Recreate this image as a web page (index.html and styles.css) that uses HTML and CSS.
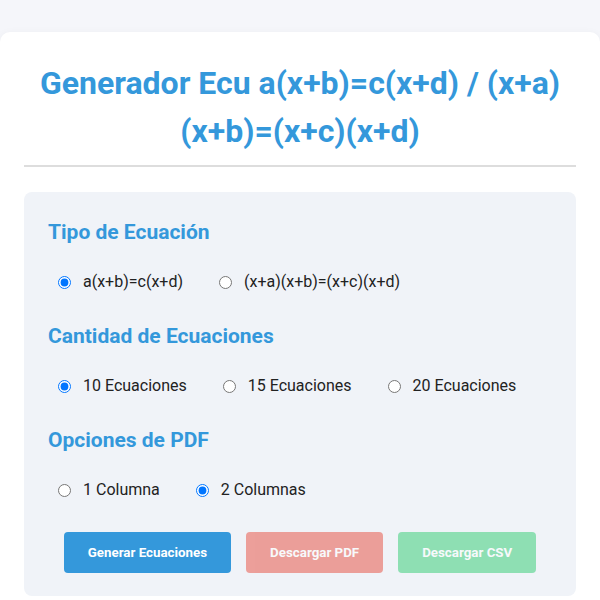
FILE: index.html
```html
<!DOCTYPE html>
<html lang="es">
<head>
<meta charset="utf-8">
<title>Generador</title>
<link rel="stylesheet" href="styles.css">
</head>
<body>
<div class="card">
  <h1 class="title">Generador Ecu a(x+b)=c(x+d) / (x+a)(x+b)=(x+c)(x+d)</h1>
  <div class="panel">
    <section class="section">
      <h2 class="heading">Tipo de Ecuación</h2>
      <div class="options">
        <label class="opt"><input type="radio" name="tipo" checked><span>a(x+b)=c(x+d)</span></label>
        <label class="opt"><input type="radio" name="tipo"><span>(x+a)(x+b)=(x+c)(x+d)</span></label>
      </div>
    </section>
    <section class="section">
      <h2 class="heading">Cantidad de Ecuaciones</h2>
      <div class="options">
        <label class="opt"><input type="radio" name="cant" checked><span>10 Ecuaciones</span></label>
        <label class="opt"><input type="radio" name="cant"><span>15 Ecuaciones</span></label>
        <label class="opt"><input type="radio" name="cant"><span>20 Ecuaciones</span></label>
      </div>
    </section>
    <section class="section">
      <h2 class="heading">Opciones de PDF</h2>
      <div class="options">
        <label class="opt"><input type="radio" name="cols"><span>1 Columna</span></label>
        <label class="opt"><input type="radio" name="cols" checked><span>2 Columnas</span></label>
      </div>
    </section>
    <div class="buttons">
      <button class="btn btn-blue">Generar Ecuaciones</button>
      <button class="btn btn-red" disabled>Descargar PDF</button>
      <button class="btn btn-green" disabled>Descargar CSV</button>
    </div>
  </div>
</div>
</body>
</html>
```
FILE: styles.css
```css
html, body {
  margin: 0;
  padding: 0;
}
body {
  background: #f5f6fa;
  font-family: Roboto, "Liberation Sans", sans-serif;
  color: #333;
  padding-top: 32px;
}
.card {
  background: #fff;
  border-radius: 10px;
  padding: 27px 24px 24px;
  box-shadow: 0 2px 10px rgba(0,0,0,0.05);
}
.title {
  margin: 0;
  text-align: center;
  color: #3498db;
  font-size: 32px;
  line-height: 48px;
  font-weight: 700;
  padding-bottom: 10px;
  border-bottom: 2px solid #dddddd;
}
.panel {
  margin-top: 25px;
  background: #f0f3f8;
  border-radius: 8px;
  padding: 27px 24px 23px;
}
.section + .section {
  margin-top: 31px;
}
.heading {
  margin: 0;
  color: #3498db;
  font-size: 21px;
  line-height: 26px;
  font-weight: 700;
}
.options {
  display: flex;
  gap: 36px;
  margin-top: 27px;
  padding-left: 10px;
}
.opt {
  display: inline-flex;
  align-items: center;
  gap: 12px;
  font-size: 16px;
  line-height: 20px;
  color: #222;
}
.opt input {
  margin: 0;
  width: 13px;
  height: 13px;
}
.buttons {
  display: flex;
  justify-content: center;
  gap: 15px;
  margin-top: 32px;
}
.btn {
  border: none;
  border-radius: 4px;
  color: #fff;
  font-family: Roboto, "Liberation Sans", sans-serif;
  font-size: 13.333px;
  font-weight: 700;
  line-height: 17px;
  padding: 12px 24px;
}
.btn-blue { background: #3498db; }
.btn-red { background: #e74c3c; opacity: 0.5; }
.btn-green { background: #2ecc71; opacity: 0.5; }
```
